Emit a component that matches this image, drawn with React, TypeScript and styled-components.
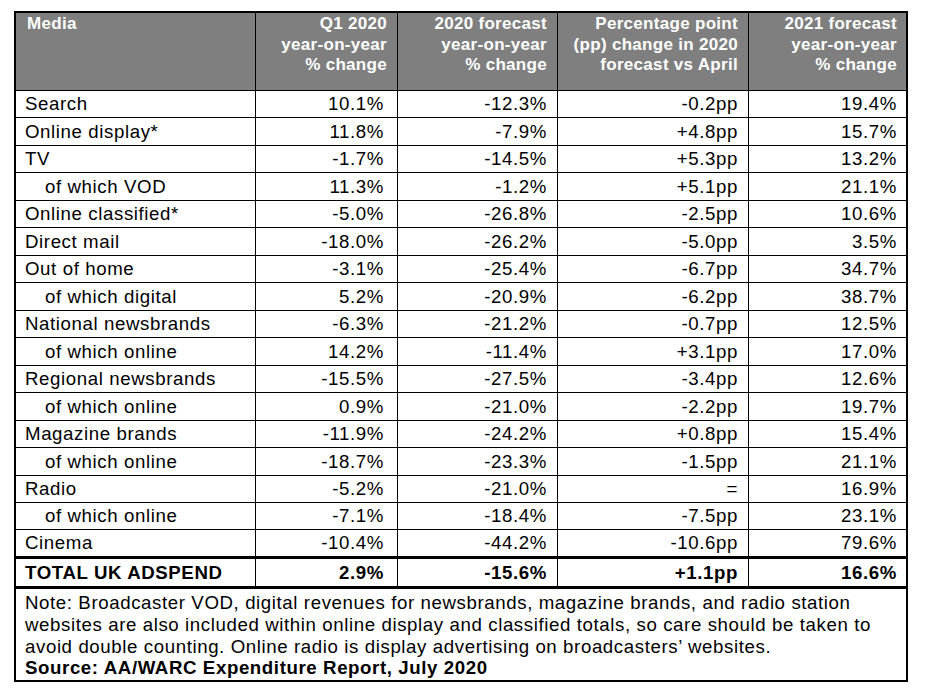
import React from "react";
import styled, { createGlobalStyle } from "styled-components";

const Global = createGlobalStyle`
  html, body { margin: 0; padding: 0; background: #ffffff; }
  body { font-family: "Liberation Sans", Arial, sans-serif; color: #000; }
`;

const Page = styled.div`
  padding: 11px 0 0 14px;
`;

const Table = styled.table`
  width: 894px;
  table-layout: fixed;
  border-collapse: separate;
  border-spacing: 0;
  border: 2px solid #000;
  font-family: "Liberation Sans", Arial, sans-serif;
`;

const HeadCell = styled.th<{ $align: "left" | "right"; $last?: boolean }>`
  box-sizing: border-box;
  height: 78px;
  padding: 1px ${(p) => (p.$last ? 9 : 10)}px 0 ${(p) => (p.$align === "left" ? 11 : 6)}px;
  background: #7f7f7f;
  color: #ffffff;
  font-size: 17px;
  font-weight: 700;
  line-height: 20.7px;
  letter-spacing: 0.3px;
  text-align: ${(p) => p.$align};
  vertical-align: top;
  border-bottom: 1px solid #000;
  border-right: ${(p) => (p.$last ? "none" : "1px solid #000")};
`;

const Cell = styled.td<{
  $align: "left" | "right";
  $h: number;
  $border: number;
  $indent?: boolean;
  $bold?: boolean;
  $padR: number;
  $last?: boolean;
}>`
  box-sizing: border-box;
  height: ${(p) => p.$h}px;
  padding: 0 ${(p) => p.$padR}px 0 ${(p) => (p.$indent ? 29 : 9)}px;
  font-size: 18.67px;
  letter-spacing: 0.6px;
  font-weight: ${(p) => (p.$bold ? 700 : 400)};
  line-height: ${(p) => p.$h - p.$border}px;
  text-align: ${(p) => p.$align};
  vertical-align: middle;
  white-space: nowrap;
  border-bottom: ${(p) => p.$border}px solid #000;
  border-right: ${(p) => (p.$last ? "none" : "1px solid #000")};
`;

const NoteCell = styled.td`
  box-sizing: border-box;
  height: 91px;
  padding: 3px 8px 0 9px;
  font-size: 18.67px;
  letter-spacing: 0.6px;
  line-height: 21.8px;
  vertical-align: top;
  text-align: left;
`;

const Source = styled.strong`
  font-weight: 700;
`;

type Row = { label: string; values: string[]; sub?: boolean };

const rows: Row[] = [
  { label: "Search", values: ["10.1%", "-12.3%", "-0.2pp", "19.4%"] },
  { label: "Online display*", values: ["11.8%", "-7.9%", "+4.8pp", "15.7%"] },
  { label: "TV", values: ["-1.7%", "-14.5%", "+5.3pp", "13.2%"] },
  { label: "of which VOD", values: ["11.3%", "-1.2%", "+5.1pp", "21.1%"], sub: true },
  { label: "Online classified*", values: ["-5.0%", "-26.8%", "-2.5pp", "10.6%"] },
  { label: "Direct mail", values: ["-18.0%", "-26.2%", "-5.0pp", "3.5%"] },
  { label: "Out of home", values: ["-3.1%", "-25.4%", "-6.7pp", "34.7%"] },
  { label: "of which digital", values: ["5.2%", "-20.9%", "-6.2pp", "38.7%"], sub: true },
  { label: "National newsbrands", values: ["-6.3%", "-21.2%", "-0.7pp", "12.5%"] },
  { label: "of which online", values: ["14.2%", "-11.4%", "+3.1pp", "17.0%"], sub: true },
  { label: "Regional newsbrands", values: ["-15.5%", "-27.5%", "-3.4pp", "12.6%"] },
  { label: "of which online", values: ["0.9%", "-21.0%", "-2.2pp", "19.7%"], sub: true },
  { label: "Magazine brands", values: ["-11.9%", "-24.2%", "+0.8pp", "15.4%"] },
  { label: "of which online", values: ["-18.7%", "-23.3%", "-1.5pp", "21.1%"], sub: true },
  { label: "Radio", values: ["-5.2%", "-21.0%", "=", "16.9%"] },
  { label: "of which online", values: ["-7.1%", "-18.4%", "-7.5pp", "23.1%"], sub: true },
  { label: "Cinema", values: ["-10.4%", "-44.2%", "-10.6pp", "79.6%"] },
];

const total: Row = { label: "TOTAL UK ADSPEND", values: ["2.9%", "-15.6%", "+1.1pp", "16.6%"] };

const headers = [
  ["Media"],
  ["Q1 2020", "year-on-year", "% change"],
  ["2020 forecast", "year-on-year", "% change"],
  ["Percentage point", "(pp) change in 2020", "forecast vs April"],
  ["2021 forecast", "year-on-year", "% change"],
];

const colWidths = [240, 142, 160, 191, 157];
const padRight = [10, 13, 10, 10, 9];

function renderRow(row: Row, h: number, border: number, bold: boolean, key: string) {
  return (
    <tr key={key}>
      <Cell $align="left" $h={h} $border={border} $indent={row.sub} $bold={bold} $padR={6}>
        {row.label}
      </Cell>
      {row.values.map((v, j) => (
        <Cell
          key={j}
          $align="right"
          $h={h}
          $border={border}
          $bold={bold}
          $padR={padRight[j + 1]}
          $last={j === row.values.length - 1}
        >
          {v}
        </Cell>
      ))}
    </tr>
  );
}

export default function App() {
  return (
    <>
      <Global />
      <Page>
        <Table>
          <colgroup>
            {colWidths.map((w, i) => (
              <col key={i} style={{ width: w }} />
            ))}
          </colgroup>
          <thead>
            <tr>
              {headers.map((lines, i) => (
                <HeadCell key={i} $align={i === 0 ? "left" : "right"} $last={i === headers.length - 1}>
                  {lines.map((l, k) => (
                    <React.Fragment key={k}>
                      {k > 0 && <br />}
                      {l}
                    </React.Fragment>
                  ))}
                </HeadCell>
              ))}
            </tr>
          </thead>
          <tbody>
            {rows.map((row, i) => {
              const isLast = i === rows.length - 1;
              const base = i % 2 === 0 || i === 15 ? 27 : 28;
              return isLast
                ? renderRow(row, 29, 3, false, `r${i}`)
                : renderRow(row, base, 1, false, `r${i}`);
            })}
            {renderRow(total, 30, 3, true, "total")}
            <tr>
              <NoteCell colSpan={5}>
                Note: Broadcaster VOD, digital revenues for newsbrands, magazine brands, and radio station
                <br />
                websites are also included within online display and classified totals, so care should be taken to
                <br />
                avoid double counting. Online radio is display advertising on broadcasters’ websites.
                <br />
                <Source>Source: AA/WARC Expenditure Report, July 2020</Source>
              </NoteCell>
            </tr>
          </tbody>
        </Table>
      </Page>
    </>
  );
}
